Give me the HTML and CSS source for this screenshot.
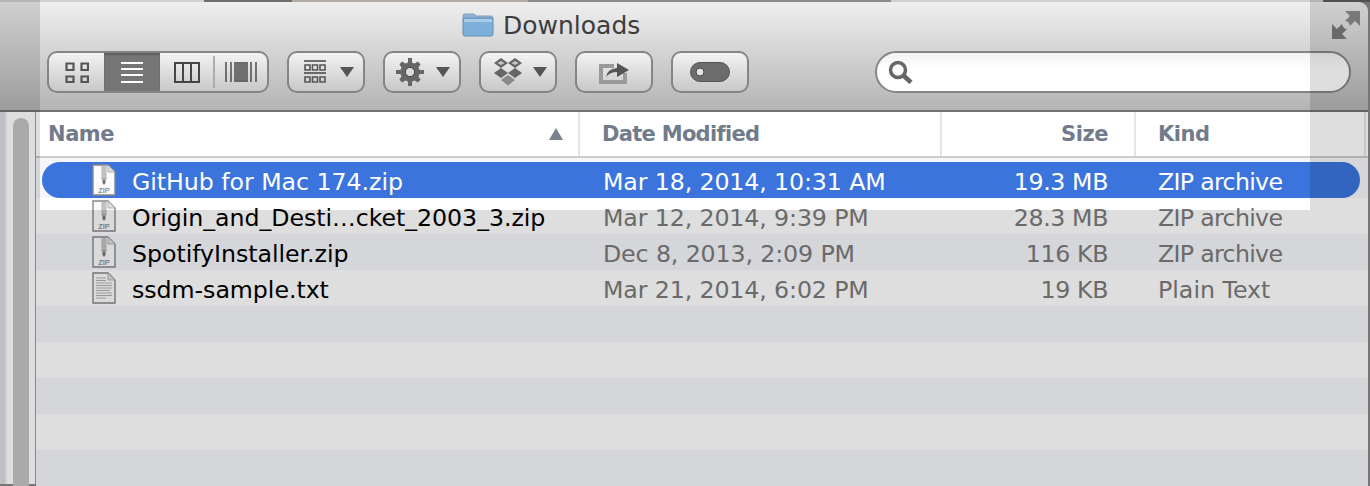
FILE: index.html
```html
<!DOCTYPE html>
<html lang="en">
<head>
   <meta charset="UTF-8" />
   <meta name="viewport" content="width=device-width, initial-scale=1.0"/>
   <title>Downloads</title>
   <link rel="stylesheet" href="styles.css">
</head>
<body>

   <div class="top-strip"></div>

   <div class="window">
      <div class="toolbar">
         <div class="title-row">
            <svg class="folder" width="32" height="24" viewBox="0 0 32 24">
               <path d="M1 5V3Q1 1 3 1H11Q13 1 14 3H29Q31 3 31 5V7H1Z" fill="#8fb4d4" stroke="#7f9fbc"/>
               <rect x="1" y="5" width="30" height="18" rx="2" fill="#7eb0da" stroke="#5f8fb8"/>
               <rect x="2" y="6" width="28" height="3" fill="#a9cbe8"/>
            </svg>
            <span class="title">Downloads</span>
         </div>
         <div class="button-row">
            <div class="segments">
               <div class="seg seg-icons">
                  <svg width="24" height="22" viewBox="0 0 24 22"><path d="M1.500 2.500H8.500V9H1.500ZM16.500 2.500H23V9H16.500ZM1.500 15.500H8.500V21H1.500ZM16.500 15.500H23V21H16.500Z" fill="none" stroke="#555" stroke-width="2.200"/></svg>
               </div>
               <div class="seg seg-active">
                  <svg width="24" height="22" viewBox="0 0 24 22"><path d="M1 2H23M1 8H23M1 14H23M1 21H23" stroke="#fff" stroke-width="2"/></svg>
               </div>
               <div class="seg seg-columns">
                  <svg width="28" height="22" viewBox="0 0 28 22"><path d="M2 2H26V21H2ZM10 2V21M18 2V21" fill="none" stroke="#444" stroke-width="2"/></svg>
               </div>
               <div class="seg seg-cover">
                  <svg width="32" height="22" viewBox="0 0 32 22">
                     <path d="M1 1V21M6 1V21M26 1V21M31 1V21" stroke="#555" stroke-width="1.600"/>
                     <rect x="9" y="3" width="14" height="16" fill="#707070"/>
                     <path d="M9 2H23M9 20H23" stroke="#444" stroke-width="1.500"/>
                  </svg>
               </div>
            </div>
            <div class="tool-btn btn-arrange">
               <svg width="22" height="24" viewBox="0 0 22 24">
                  <path d="M0 1H22M0 13H22" stroke="#444" stroke-width="1.600"/>
                  <path d="M1 5H6V10H1ZM8.500 5H13.500V10H8.500ZM16 5H21V10H16ZM1 17H6V22H1ZM8.500 17H13.500V22H8.500ZM16 17H21V22H16Z" fill="none" stroke="#555" stroke-width="1.600"/>
               </svg>
               <span class="caret"></span>
            </div>
            <div class="tool-btn btn-gear">
               <svg width="28" height="28" viewBox="0 0 28 28">
                  <path d="M12 0H16V4.400L18.600 5.500L21.800 3.400L24.600 6.200L22.500 9.400L23.600 12H28V16H23.600L22.500 18.600L24.600 21.800L21.800 24.600L18.600 22.500L16 23.600V28H12V23.600L9.400 22.500L6.200 24.600L3.400 21.800L5.500 18.600L4.400 16H0V12H4.400L5.500 9.400L3.400 6.200L6.200 3.400L9.400 5.500L12 4.400Z" fill="#666"/>
                  <circle cx="14" cy="14" r="4.600" fill="#dcdcdc" stroke="#444" stroke-width="1"/>
               </svg>
               <span class="caret"></span>
            </div>
            <div class="tool-btn btn-dropbox">
               <svg width="30" height="28" viewBox="0 0 30 28">
                  <path d="M8 0L15 5L8 10L1 5Z M22 0L29 5L22 10L15 5Z M8 10L15 15L8 20L1 15Z M22 10L29 15L22 20L15 15Z" fill="#666"/>
                  <path d="M15 17L22 22L15 27.500L8 22Z" fill="#8a8a8a"/>
                  <path d="M8 3L11.500 5L8 7L4.500 5Z M22 3L25.500 5L22 7L18.500 5Z" fill="#c8c8c8"/>
               </svg>
               <span class="caret"></span>
            </div>
            <div class="tool-btn btn-center">
               <svg width="32" height="24" viewBox="0 0 32 24">
                  <path d="M1 4H16V8H5V20H25V13H29V24H1Z" fill="#9a9a9a"/>
                  <path d="M8 17Q9 9 19 8V3L31 10L19 17V12Q12 12 8 17Z" fill="#555"/>
               </svg>
            </div>
            <div class="tool-btn btn-center">
               <svg width="40" height="20" viewBox="0 0 40 20">
                  <rect x=".5" y=".5" width="39" height="19" rx="9.500" fill="#6c6c6c" stroke="#555"/>
                  <circle cx="10" cy="10" r="4" fill="#e4e4e4" stroke="#444"/>
               </svg>
            </div>
            <div class="search">
               <svg width="26" height="24" viewBox="0 0 26 24">
                  <circle cx="10" cy="10" r="7.500" fill="none" stroke="#666" stroke-width="3.500"/>
                  <path d="M15.500 15.500L23 22.500" stroke="#666" stroke-width="4.500"/>
               </svg>
            </div>
         </div>
         <svg class="fullscreen" width="28" height="28" viewBox="0 0 28 28">
            <path d="M13 0H28V15L23 10L18 15Q17 10 13 10L18 5Z" fill="#8c8c8c"/>
            <path d="M0 13L5 18L10 13Q11 18 15 18L10 23L15 28H0Z" fill="#7a7a7a"/>
         </svg>
      </div>

      <div class="content">
         <div class="sidebar">
            <div class="scrollbar"></div>
         </div>
         <div class="list">
            <div class="list-head">
               <div class="col col-name">Name<span class="sort-arrow"></span></div>
               <div class="col col-date">Date Modified</div>
               <div class="col col-size">Size</div>
               <div class="col col-kind">Kind</div>
            </div>
            <div class="rows">
               <div class="row">
                  <div class="row-in selected">
                     <div class="cell-name">
                        <svg class="file-icon" viewBox="0 0 24 32">
                           <path class="page" d="M1 1H16L23 8V31H1Z"/>
                           <path class="fold" d="M16 1V8H23Z"/>
                           <rect class="zipper" x="9.500" y="1.500" width="5" height="14"/>
                           <path class="teeth" d="M9.500 3H14.500M9.500 5H14.500M9.500 7H14.500M9.500 9H14.500M9.500 11H14.500M9.500 13H14.500"/>
                           <path class="pull" d="M10.500 15.500H13.500V19L12 21L10.500 19Z"/>
                           <text class="zip-label" x="12" y="29">ZIP</text>
                        </svg>
                        <span class="name-text">GitHub for Mac 174.zip</span>
                     </div>
                     <div class="cell-date">Mar 18, 2014, 10:31 AM</div>
                     <div class="cell-size">19.3 MB</div>
                     <div class="cell-kind kind-zip">ZIP archive</div>
                  </div>
               </div>
               <div class="row">
                  <div class="row-in">
                     <div class="cell-name">
                        <svg class="file-icon" viewBox="0 0 24 32">
                           <path class="page" d="M1 1H16L23 8V31H1Z"/>
                           <path class="fold" d="M16 1V8H23Z"/>
                           <rect class="zipper" x="9.500" y="1.500" width="5" height="14"/>
                           <path class="teeth" d="M9.500 3H14.500M9.500 5H14.500M9.500 7H14.500M9.500 9H14.500M9.500 11H14.500M9.500 13H14.500"/>
                           <path class="pull" d="M10.500 15.500H13.500V19L12 21L10.500 19Z"/>
                           <text class="zip-label" x="12" y="29">ZIP</text>
                        </svg>
                        <span class="name-text">Origin_and_Desti…cket_2003_3.zip</span>
                     </div>
                     <div class="cell-date">Mar 12, 2014, 9:39 PM</div>
                     <div class="cell-size">28.3 MB</div>
                     <div class="cell-kind kind-zip">ZIP archive</div>
                  </div>
               </div>
               <div class="row">
                  <div class="row-in">
                     <div class="cell-name">
                        <svg class="file-icon" viewBox="0 0 24 32">
                           <path class="page" d="M1 1H16L23 8V31H1Z"/>
                           <path class="fold" d="M16 1V8H23Z"/>
                           <rect class="zipper" x="9.500" y="1.500" width="5" height="14"/>
                           <path class="teeth" d="M9.500 3H14.500M9.500 5H14.500M9.500 7H14.500M9.500 9H14.500M9.500 11H14.500M9.500 13H14.500"/>
                           <path class="pull" d="M10.500 15.500H13.500V19L12 21L10.500 19Z"/>
                           <text class="zip-label" x="12" y="29">ZIP</text>
                        </svg>
                        <span class="name-text">SpotifyInstaller.zip</span>
                     </div>
                     <div class="cell-date">Dec 8, 2013, 2:09 PM</div>
                     <div class="cell-size">116 KB</div>
                     <div class="cell-kind kind-zip">ZIP archive</div>
                  </div>
               </div>
               <div class="row">
                  <div class="row-in">
                     <div class="cell-name">
                        <svg class="file-icon" viewBox="0 0 24 32">
                           <path class="page" d="M1 1H16L23 8V31H1Z"/>
                           <path class="fold" d="M16 1V8H23Z"/>
                           <path class="lines" d="M4 6H14M4 8.500H14M4 11H20M4 13.500H20M4 16H20M4 18.500H18M4 21H20M4 23.500H20M4 26H14"/>
                        </svg>
                        <span class="name-text">ssdm-sample.txt</span>
                     </div>
                     <div class="cell-date">Mar 21, 2014, 6:02 PM</div>
                     <div class="cell-size">19 KB</div>
                     <div class="cell-kind">Plain Text</div>
                  </div>
               </div>
               <div class="row"></div>
               <div class="row"></div>
               <div class="row"></div>
               <div class="row"></div>
               <div class="row"></div>
            </div>
         </div>
      </div>
   </div>

   <div class="spotlight"></div>

</body>
</html>
```

FILE: styles.css
```css
* {
   margin: 0;
   padding: 0;
   box-sizing: border-box;
}
html, body {
   height: 486px;
   overflow: hidden;
}
body {
   position: relative;
   background-color: #888;
   font-family: "DejaVu Sans", Verdana, sans-serif;
   color: #000;
}
.top-strip {
   height: 2px;
   background: linear-gradient(to right,
      #d2d2d2 0 204px, #6e6e6e 204px 292px, #b3aca4 292px 528px,
      #8c8c8c 528px 891px, #cfcfcf 891px 1323px, #5c5c5c 1323px);
}

/* window */
.window {
   width: 1368px;
   height: 484px;
   border-top-right-radius: 9px;
   overflow: hidden;
}
.toolbar {
   position: relative;
   height: 110px;
   border-bottom: 2px solid #727272;
   background: linear-gradient(to bottom, #efefef, #b4b4b4);
}
.title-row {
   display: flex;
   align-items: center;
   height: 49px;
   padding: 0 0 3px 462px;
}
.folder {
   margin-right: 9px;
}
.title {
   font-size: 25px;
   color: #3c3c3c;
}
.button-row {
   display: flex;
   gap: 18px;
   height: 42px;
   padding-left: 47px;
}
.fullscreen {
   position: absolute;
   top: 9px;
   left: 1332px;
}

/* toolbar buttons */
.segments {
   display: flex;
   width: 222px;
   border: 2px solid #858585;
   border-radius: 10px;
   overflow: hidden;
   background: linear-gradient(to bottom, #f3f3f3, #c8c8c8);
}
.seg {
   display: flex;
   align-items: center;
   justify-content: center;
}
.seg-icons {
   width: 55px;
}
.seg-active {
   width: 56px;
   background: #767676;
   box-shadow: inset 0 2px 2px #5e5e5e;
}
.seg-columns {
   width: 53px;
}
.seg-cover {
   flex: 1;
   margin: 3px 0;
   border-left: 2px solid #adadad;
}
.tool-btn {
   display: flex;
   align-items: center;
   width: 78px;
   border: 2px solid #858585;
   border-radius: 10px;
   background: linear-gradient(to bottom, #f3f3f3, #c8c8c8);
}
.btn-arrange {
   gap: 14px;
   padding-left: 15px;
}
.btn-gear {
   gap: 12px;
   padding-left: 11px;
}
.btn-dropbox {
   gap: 10px;
   padding-left: 12px;
}
.btn-center {
   justify-content: center;
}
.caret {
   width: 0;
   height: 0;
   border-top: 10px solid #555;
   border-left: 7px solid transparent;
   border-right: 7px solid transparent;
}
.search {
   display: flex;
   align-items: center;
   width: 476px;
   margin-left: 108px;
   padding-left: 11px;
   border: 2px solid #858585;
   border-radius: 21px;
   background: linear-gradient(to bottom, #f2f2f2, #fff 40%);
}

/* sidebar + list */
.content {
   display: flex;
   height: 372px;
}
.sidebar {
   width: 36px;
   padding: 6px 6px 0 13px;
   border-right: 1px solid #9c9c9c;
   background: linear-gradient(to right, #d8dde4 0 5px, #eee 5px 7px, #fff 7px);
}
.scrollbar {
   width: 16px;
   height: 400px;
   border-radius: 8px 8px 0 0;
   background-color: #c4c4c4;
}
.list {
   flex: 1;
   background-color: #fff;
}
.list-head {
   display: grid;
   grid-template-columns: 544px 362px 194px 230px;
   height: 46px;
   border-bottom: 2px solid #ccc;
   font-size: 21px;
   font-weight: bold;
   letter-spacing: -.45px;
   color: #727b8b;
}
.col {
   display: flex;
   align-items: center;
   border-right: 2px solid #e6e6e6;
}
.col-name {
   justify-content: space-between;
   padding: 0 15px 0 12px;
}
.col-date {
   padding-left: 22px;
   letter-spacing: -.7px;
}
.col-size {
   justify-content: flex-end;
   padding-right: 26px;
}
.col-kind {
   padding-left: 22px;
}
.sort-arrow {
   width: 0;
   height: 0;
   border-bottom: 12px solid #7a8291;
   border-left: 7px solid transparent;
   border-right: 7px solid transparent;
}
.rows {
   padding-top: 4px;
   background-color: #f5f6fa;
}
.row {
   height: 36px;
}
.row:nth-child(even) {
   background-color: #fff;
}
.row-in {
   display: grid;
   grid-template-columns: 561px 345px 160px 1fr;
   align-items: center;
   height: 36px;
   margin: 0 8px 0 6px;
   border-radius: 18px;
   font-size: 23.7px;
}
.selected {
   background-color: #3a74dc;
   color: #fff;
}
.cell-name {
   display: flex;
   align-items: center;
   padding-left: 50px;
   letter-spacing: -.05px;
}
.name-text, .cell-date, .cell-size, .cell-kind {
   padding-top: 4px;
}
.cell-date, .cell-size, .cell-kind {
   color: #7a7a7a;
}
.selected .cell-date, .selected .cell-size, .selected .cell-kind {
   color: #fff;
}
.cell-date {
   letter-spacing: -.12px;
}
.cell-size {
   text-align: right;
   letter-spacing: -.4px;
}
.cell-kind {
   padding-left: 50px;
}
.kind-zip {
   letter-spacing: -.7px;
}

/* file icons */
.file-icon {
   width: 24px;
   height: 32px;
   margin-right: 16px;
}
.page {
   fill: #fbfbfb;
   stroke: #85878c;
   stroke-width: 1.4;
}
.fold {
   fill: #dedede;
   stroke: #a5a5a5;
   stroke-width: .8;
}
.zipper {
   fill: #a8a8a8;
}
.teeth {
   stroke: #e6e6e6;
   stroke-width: .8;
}
.pull {
   fill: #777;
}
.lines {
   stroke: #b0b0b0;
   stroke-width: 1;
}
.zip-label {
   font-family: "Liberation Sans", Arial, sans-serif;
   font-size: 7.5px;
   fill: #666;
   text-anchor: middle;
}

/* page dimmed around the highlighted part */
.spotlight {
   position: absolute;
   top: 0;
   left: 40px;
   width: 1270px;
   height: 210px;
   box-shadow: 0 0 0 1500px rgba(0, 0, 0, .13);
}
```
